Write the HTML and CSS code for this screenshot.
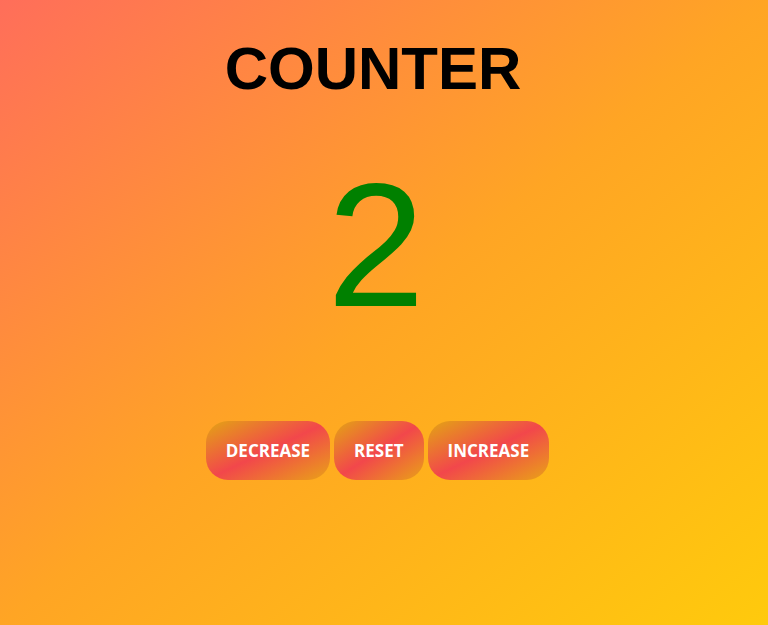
FILE: index.html
```html
<!DOCTYPE html>
<html lang="en">
<head>
<meta charset="utf-8">
<title>Counter</title>
<link rel="stylesheet" href="styles.css">
</head>
<body>
<main class="counter">
  <h1 class="title">COUNTER</h1>
  <div class="value">2</div>
  <div class="buttons">
    <button class="btn">DECREASE</button>
    <button class="btn">RESET</button>
    <button class="btn">INCREASE</button>
  </div>
</main>
</body>
</html>
```
FILE: styles.css
```css
html, body {
  height: 100%;
}
body {
  margin: 0;
  background: linear-gradient(to bottom right, #ff6e5a, #ffa524 50%, #ffca0c);
  font-family: "Liberation Sans", Arial, sans-serif;
  overflow: hidden;
}
.counter {
  width: 752px;
  display: flex;
  flex-direction: column;
  align-items: center;
  padding-top: 35px;
}
.title {
  margin: 0 6px 0 0;
  font-size: 60px;
  font-weight: bold;
  line-height: 67px;
  color: #000;
}
.value {
  margin-top: 42px;
  font-size: 176px;
  line-height: 202px;
  color: #008000;
}
.buttons {
  display: flex;
  gap: 4px;
  margin: 75px 0 0 3px;
}
.btn {
  border: none;
  border-radius: 22px;
  padding: 18px 20px;
  font-family: "Open Sans", sans-serif;
  font-weight: 700;
  font-size: 17px;
  line-height: 23px;
  color: #fff;
  background: linear-gradient(to bottom right, #e3a514, #f2474b, #e9a217);
  cursor: pointer;
}
```
